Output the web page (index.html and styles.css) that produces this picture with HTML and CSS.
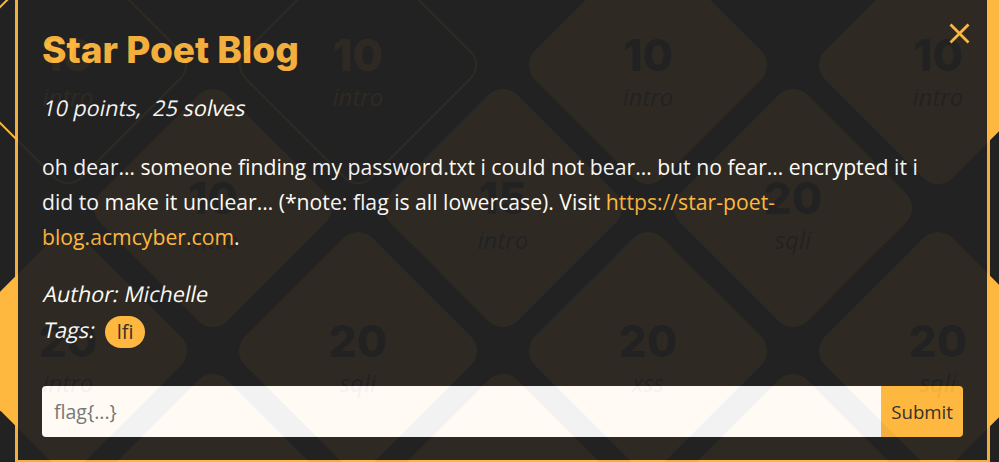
FILE: index.html
```html
<!DOCTYPE html>
<html lang="en">
<head>
<meta charset="utf-8">
<title>Star Poet Blog</title>
<link rel="stylesheet" href="styles.css">
</head>
<body>
<div class="stage">
<div class="board">
  <div class="row">
    <div class="cell"><div class="card card-outline"><div class="card-body"><span class="pts">10</span><span class="cat">intro</span></div></div></div>
    <div class="cell"><div class="card card-outline"><div class="card-body"><span class="pts">10</span><span class="cat">intro</span></div></div></div>
    <div class="cell"><div class="card card-filled"><div class="card-body"><span class="pts">10</span><span class="cat">intro</span></div></div></div>
    <div class="cell"><div class="card card-filled"><div class="card-body"><span class="pts">10</span><span class="cat">intro</span></div></div></div>
  </div>
  <div class="row row-offset">
    <div class="cell"><div class="card card-filled"><div class="card-body"><span class="pts">10</span><span class="cat">intro</span></div></div></div>
    <div class="cell"><div class="card card-filled"><div class="card-body"><span class="pts">15</span><span class="cat">intro</span></div></div></div>
    <div class="cell"><div class="card card-filled"><div class="card-body"><span class="pts">20</span><span class="cat">sqli</span></div></div></div>
  </div>
  <div class="row">
    <div class="cell"><div class="card card-filled"><div class="card-body"><span class="pts">20</span><span class="cat">intro</span></div></div></div>
    <div class="cell"><div class="card card-filled"><div class="card-body"><span class="pts">20</span><span class="cat">sqli</span></div></div></div>
    <div class="cell"><div class="card card-filled"><div class="card-body"><span class="pts">20</span><span class="cat">xss</span></div></div></div>
    <div class="cell"><div class="card card-filled"><div class="card-body"><span class="pts">20</span><span class="cat">sqli</span></div></div></div>
  </div>
  <div class="row row-offset">
    <div class="cell"><div class="card card-filled"></div></div>
    <div class="cell"><div class="card card-filled"></div></div>
    <div class="cell"><div class="card card-filled"></div></div>
  </div>
</div>

<div class="modal">
  <div class="modal-header">
    <h2 class="title">Star Poet Blog</h2>
    <button class="close" type="button" aria-label="Close">
      <svg width="21" height="21" viewBox="0 0 21 21"><path d="M1.5 1.5L19.5 19.5M19.5 1.5L1.5 19.5" stroke="#ffb83f" stroke-width="2.8" fill="none"/></svg>
    </button>
  </div>
  <p class="meta"><span class="slant">10 points,&nbsp; 25 solves</span></p>
  <p class="desc">oh dear… someone finding my password.txt i could not bear… but no fear… encrypted it i<br>did to make it unclear… (*note: flag is all lowercase). Visit <a class="link" href="#">https://star-poet-<br>blog.acmcyber.com</a>.</p>
  <p class="author"><span class="slant">Author: Michelle</span></p>
  <p class="tags"><span class="slant">Tags:</span> <span class="badge">lfi</span></p>
  <form class="flag-form">
    <input class="flag-input" type="text" placeholder="flag{...}">
    <button class="submit" type="button">Submit</button>
  </form>
</div>
</div>
</body>
</html>
```
FILE: styles.css
```css
html, body {
  margin: 0;
  padding: 0;
}
body {
  background: #222222;
  font-family: "Open Sans", "Noto Sans", sans-serif;
}
.stage {
  position: relative;
  width: 999px;
  height: 462px;
  overflow: hidden;
}

/* background challenge board */
.board {
  margin: -6px 0 0 -77px;
}
.row {
  display: flex;
  height: 142.7px;
}
.row-offset {
  padding-left: 145px;
}
.cell {
  flex: none;
  width: 290px;
  height: 100%;
  display: flex;
  align-items: center;
  justify-content: center;
}
.card {
  flex: none;
  width: 180px;
  height: 180px;
  box-sizing: border-box;
  border-radius: 20px;
  transform: rotate(45deg);
  display: flex;
  align-items: center;
  justify-content: center;
}
.card-filled {
  background: #ffb83f;
  color: #222222;
}
.card-outline {
  border: 2px solid #ffb83f;
  color: #ffb83f;
}
.card-body {
  transform: rotate(-45deg);
  display: flex;
  flex-direction: column;
  align-items: center;
  padding-top: 9px;
}
.pts {
  font-family: Inter, "Noto Sans", sans-serif;
  font-weight: 800;
  font-size: 44px;
  line-height: 53px;
}
.cat {
  font-style: italic;
  font-size: 24px;
  line-height: 29px;
}

/* modal */
.modal {
  position: absolute;
  left: 15px;
  top: -3px;
  width: 975px;
  height: 466px;
  box-sizing: border-box;
  border: 3px solid #ffb83f;
  background: #222222;
  opacity: 0.94;
  padding: 28px 24px 23px;
  color: #ffffff;
  display: flex;
  flex-direction: column;
}
.modal-header {
  display: flex;
  justify-content: space-between;
  align-items: flex-start;
}
.title {
  margin: 0;
  font-family: Inter, "Noto Sans", sans-serif;
  font-weight: 800;
  font-size: 37px;
  line-height: 44px;
  color: #ffb83f;
}
.close {
  margin: -5px -7px 0 0;
  padding: 0;
  border: 0;
  background: none;
  width: 21px;
  height: 21px;
  display: flex;
  cursor: pointer;
}
.slant {
  display: inline-block;
  transform: skewX(-12deg);
  transform-origin: 0 75%;
}
.meta {
  margin: 17.7px 0 0;
  font-size: 21.6px;
  line-height: 35px;
}
.desc {
  margin: 24.7px 0 0;
  font-size: 21.2px;
  line-height: 35px;
}
.link {
  color: #ffb83f;
  text-decoration: none;
}
.author {
  margin: 21.8px 0 0;
  font-size: 21.6px;
  line-height: 36px;
}
.tags {
  margin: 0;
  font-size: 21.6px;
  line-height: 36px;
}
.badge {
  display: inline-block;
  vertical-align: middle;
  margin-left: 6px;
  padding: 0 11.5px;
  height: 32px;
  line-height: 32px;
  border-radius: 16px;
  background: #ffb83f;
  color: #2a2a2a;
  font-size: 20px;
}
.flag-form {
  display: flex;
  margin: auto 0 0;
  height: 51px;
}
.flag-input {
  flex: 1;
  min-width: 0;
  border: 0;
  outline: none;
  border-radius: 4px 0 0 4px;
  padding: 0 12px;
  background: #ffffff;
  color: #222222;
  font-family: "Open Sans", sans-serif;
  font-size: 19.5px;
}
.flag-input::placeholder {
  color: #6c757d;
}
.submit {
  border: 0;
  border-radius: 0 4px 4px 0;
  padding: 0 10px;
  background: #ffb83f;
  color: #2a2a2a;
  font-family: "Open Sans", sans-serif;
  font-size: 18.7px;
}
```
